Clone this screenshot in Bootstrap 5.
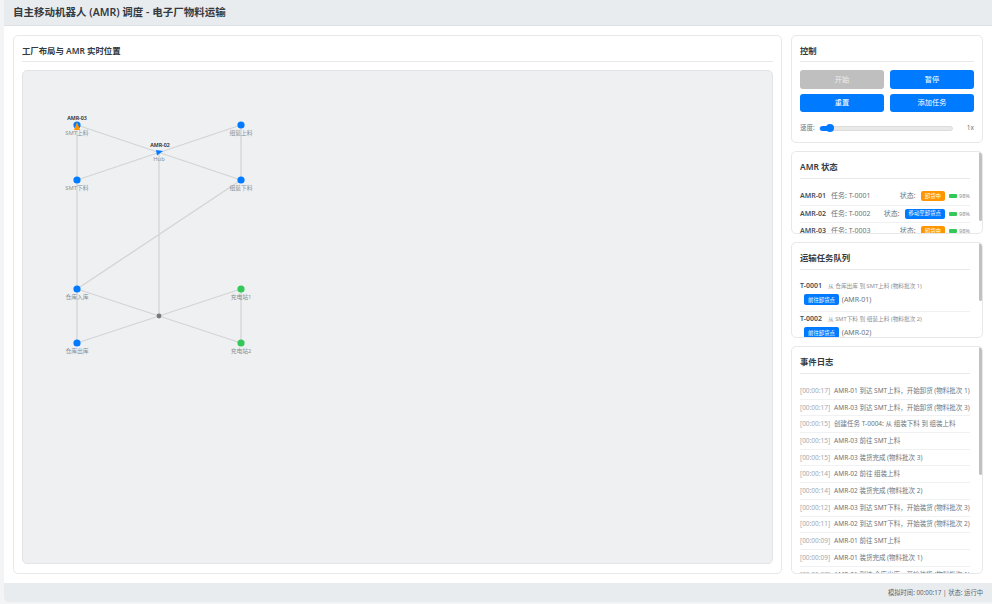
<!DOCTYPE html>
<html lang="zh">
<head>
  <meta charset="UTF-8">
  <meta name="viewport" content="width=device-width, initial-scale=1.0">
  <title>自主移动机器人 (AMR) 调度</title>
  <link href="https://cdn.jsdelivr.net/npm/bootstrap@5.3.3/dist/css/bootstrap.min.css" rel="stylesheet" crossorigin="anonymous">
  <style>
    html, body { height: 100%; }
    body { font-family: "Noto Sans", "Noto Sans CJK SC", sans-serif; background: #f3f4f6; color: #343a40; font-size: 8px; overflow: hidden; padding: 0 0 2px 4px; }
    .app-top { height: 26px; background: #e9ecef; border-bottom: 1px solid #dee2e6; padding: 0 9px; font-size: 10.5px; font-weight: 600; }
    .app-main { flex: 1; min-height: 0; background: #fff; padding: 9px; gap: 9px; }
    .app-foot { height: 19px; background: #e9ecef; padding: 0 9px; font-size: 6.3px; color: #5c6369; border-bottom-left-radius: 5px; }
    .left-col { flex: 1; min-width: 0; }
    .side-col { width: 192px; flex: none; gap: 8px; }
    .box { border: 1px solid #e6e8ea; border-radius: 5px; background: #fff; padding: 8px; }
    .box-title { font-size: 8.4px; font-weight: 600; color: #343a40; line-height: 14px; height: 18px; border-bottom: 1px solid #e6e8ea; margin-bottom: 8px; }
    .tall-title { height: 19px; margin-bottom: 9px; }
    .floor { background: #eef0f2; border: 1px solid #e2e4e7; border-radius: 5px; overflow: hidden; margin-bottom: 1px; }
    .floor svg { display: block; }
    .edge { stroke: #d3d4d6; stroke-width: 1.3; fill: none; }
    .node-name { font-size: 5.8px; fill: #8b9096; text-anchor: middle; }
    .amr-name { font-size: 5.3px; fill: #212529; text-anchor: middle; font-weight: 600; }
    .ctl-grid { grid-template-columns: 1fr 1fr; gap: 5px 6px; }
    .ctl-btn { height: 18.5px; border: 0; border-radius: 3px; background: #007bff; color: #fff; font-size: 7.2px; padding: 0; }
    .ctl-btn:disabled { background: #bfbfbf; color: #eee; opacity: 1; }
    .speed-row { font-size: 6.5px; color: #6c757d; margin-top: 10px; gap: 4.5px; line-height: 12px; }
    .speed-track { flex: 1; height: 5px; background: #e9e9e9; border: 1px solid #dcdcdc; border-radius: 3px; position: relative; margin-right: 9px; }
    .speed-fill { height: 5px; margin-top: -1px; background: #007bff; border-radius: 3px; }
    .speed-knob { position: absolute; width: 8px; height: 8px; border-radius: 50%; background: #007bff; left: 6px; top: -2.5px; }
    .scroll-box { position: relative; overflow: hidden; padding-right: 12px; }
    .amr-box { height: 83px; flex: none; }
    .task-box { height: 96px; flex: none; }
    .log-box { flex: 1; min-height: 0; }
    .scroll-thumb { position: absolute; right: 0; top: 0; width: 3px; background: #c1c1c1; border-radius: 2px; }
    .amr-row { height: 17.5px; border-bottom: 1px solid #f0f1f2; font-size: 7px; color: #6c757d; white-space: nowrap; }
    .amr-row b { font-weight: 600; color: #495057; margin-right: 5px; }
    .state-tag { font-size: 5.4px; color: #fff; border-radius: 2px; padding: 1.5px 4px; margin-left: 5px; line-height: 7px; }
    .tag-orange { background: #ff9500; }
    .tag-blue { background: #007bff; }
    .batt { width: 8px; height: 4px; background: #34c759; border-radius: 1px; margin-left: 4px; margin-right: 2px; }
    .batt-num { font-size: 5.6px; color: #8b9096; }
    .task-item { border-bottom: 1px solid #f0f1f2; height: 33px; white-space: nowrap; }
    .task-item b { font-size: 7px; font-weight: 600; color: #495057; margin-right: 4px; }
    .task-route { font-size: 5.7px; color: #8b9096; }
    .task-who { font-size: 7px; color: #6c757d; margin-top: 3px; padding-left: 4px; }
    .task-who .state-tag { margin-left: 0; margin-right: 1px; }
    .log-line { height: 16.7px; border-bottom: 1px solid #f0f1f2; font-size: 6.5px; color: #6c757d; white-space: nowrap; }
    .log-time { color: #a5a9ad; margin-right: 4px; }
  </style>
</head>
<body class="d-flex flex-column">
  <div class="app-top d-flex align-items-center">自主移动机器人 (AMR) 调度 - 电子厂物料运输</div>

  <div class="app-main d-flex">
    <div class="left-col box d-flex flex-column">
      <div class="box-title">工厂布局与 AMR 实时位置</div>
      <div class="floor flex-fill">
        <svg width="749" height="491" viewBox="23 71 749 491">
          <path class="edge" d="M77 125V343M77 125L241 180M77 180L241 125M241 125V180M241 180L77 289M159 152V316M77 289L241 343M77 343L241 289M241 289V343"/>
          <circle cx="77" cy="125" r="3.6" fill="#007bff"/>
          <circle cx="241" cy="125" r="3.6" fill="#007bff"/>
          <circle cx="77" cy="180" r="3.6" fill="#007bff"/>
          <circle cx="241" cy="180" r="3.6" fill="#007bff"/>
          <circle cx="77" cy="289" r="3.6" fill="#007bff"/>
          <circle cx="77" cy="343" r="3.6" fill="#007bff"/>
          <circle cx="241" cy="289" r="3.6" fill="#34c759"/>
          <circle cx="241" cy="343" r="3.6" fill="#34c759"/>
          <circle cx="159" cy="316" r="2.4" fill="#77787c"/>
          <text class="node-name" x="77" y="134.5">SMT上料</text>
          <text class="node-name" x="241" y="134.5">组装上料</text>
          <text class="node-name" x="77" y="189.5">SMT下料</text>
          <text class="node-name" x="241" y="189.5">组装下料</text>
          <text class="node-name" x="159" y="160.5">Hub</text>
          <text class="node-name" x="77" y="298.5">仓库入库</text>
          <text class="node-name" x="77" y="352.5">仓库出库</text>
          <text class="node-name" x="241" y="298.5">充电站1</text>
          <text class="node-name" x="241" y="352.5">充电站2</text>
          <!-- AMR markers -->
          <path d="M77 122L80 130H74Z" fill="#ff9500"/>
          <path d="M156 150L163 151L157 155.5Z" fill="#007bff"/>
          <text class="amr-name" x="77" y="120">AMR-03</text>
          <text class="amr-name" x="160" y="147">AMR-02</text>
        </svg>
      </div>
    </div>

    <div class="side-col d-flex flex-column">
      <div class="box">
        <div class="box-title">控制</div>
        <div class="d-grid ctl-grid">
          <button class="ctl-btn" disabled>开始</button>
          <button class="ctl-btn">暂停</button>
          <button class="ctl-btn">重置</button>
          <button class="ctl-btn">添加任务</button>
        </div>
        <div class="speed-row d-flex align-items-center">
          <span>速度:</span>
          <div class="speed-track"><div class="speed-fill" style="width: 8%"></div><div class="speed-knob"></div></div>
          <span>1x</span>
        </div>
      </div>

      <div class="box scroll-box amr-box">
        <div class="scroll-thumb" style="height: 69px"></div>
        <div class="box-title tall-title">AMR 状态</div>
        <div class="amr-row d-flex align-items-center"><b>AMR-01</b><span>任务: T-0001</span><span class="ms-auto">状态:</span><span class="state-tag tag-orange">卸货中</span><span class="batt"></span><span class="batt-num">98%</span></div>
        <div class="amr-row d-flex align-items-center"><b>AMR-02</b><span>任务: T-0002</span><span class="ms-auto">状态:</span><span class="state-tag tag-blue">移动至卸货点</span><span class="batt"></span><span class="batt-num">98%</span></div>
        <div class="amr-row d-flex align-items-center"><b>AMR-03</b><span>任务: T-0003</span><span class="ms-auto">状态:</span><span class="state-tag tag-orange">卸货中</span><span class="batt"></span><span class="batt-num">98%</span></div>
      </div>

      <div class="box scroll-box task-box">
        <div class="scroll-thumb" style="height: 58px"></div>
        <div class="box-title tall-title">运输任务队列</div>
        <div class="task-item">
          <div><b>T-0001</b> <span class="task-route">从 仓库出库 到 SMT上料 (物料批次 1)</span></div>
          <div class="task-who"><span class="state-tag tag-blue">前往卸货点</span> (AMR-01)</div>
        </div>
        <div class="task-item">
          <div><b>T-0002</b> <span class="task-route">从 SMT下料 到 组装上料 (物料批次 2)</span></div>
          <div class="task-who"><span class="state-tag tag-blue">前往卸货点</span> (AMR-02)</div>
        </div>
      </div>

      <div class="box scroll-box log-box">
        <div class="scroll-thumb" style="height: 128px"></div>
        <div class="box-title tall-title">事件日志</div>
        <div class="log-line d-flex align-items-center"><span class="log-time">[00:00:17]</span>AMR-01 到达 SMT上料，开始卸货 (物料批次 1)</div>
        <div class="log-line d-flex align-items-center"><span class="log-time">[00:00:17]</span>AMR-03 到达 SMT上料，开始卸货 (物料批次 3)</div>
        <div class="log-line d-flex align-items-center"><span class="log-time">[00:00:15]</span>创建任务 T-0004: 从 组装下料 到 组装上料</div>
        <div class="log-line d-flex align-items-center"><span class="log-time">[00:00:15]</span>AMR-03 前往 SMT上料</div>
        <div class="log-line d-flex align-items-center"><span class="log-time">[00:00:15]</span>AMR-03 装货完成 (物料批次 3)</div>
        <div class="log-line d-flex align-items-center"><span class="log-time">[00:00:14]</span>AMR-02 前往 组装上料</div>
        <div class="log-line d-flex align-items-center"><span class="log-time">[00:00:14]</span>AMR-02 装货完成 (物料批次 2)</div>
        <div class="log-line d-flex align-items-center"><span class="log-time">[00:00:12]</span>AMR-03 到达 SMT下料，开始装货 (物料批次 3)</div>
        <div class="log-line d-flex align-items-center"><span class="log-time">[00:00:11]</span>AMR-02 到达 SMT下料，开始装货 (物料批次 2)</div>
        <div class="log-line d-flex align-items-center"><span class="log-time">[00:00:09]</span>AMR-01 前往 SMT上料</div>
        <div class="log-line d-flex align-items-center"><span class="log-time">[00:00:09]</span>AMR-01 装货完成 (物料批次 1)</div>
        <div class="log-line d-flex align-items-center"><span class="log-time">[00:00:07]</span>AMR-01 到达 仓库出库，开始装货 (物料批次 1)</div>
      </div>
    </div>
  </div>

  <div class="app-foot d-flex align-items-center justify-content-end">模拟时间: 00:00:17 | 状态: 运行中</div>
  <script src="https://cdn.jsdelivr.net/npm/bootstrap@5.3.3/dist/js/bootstrap.bundle.min.js" crossorigin="anonymous"></script>
</body>
</html>
